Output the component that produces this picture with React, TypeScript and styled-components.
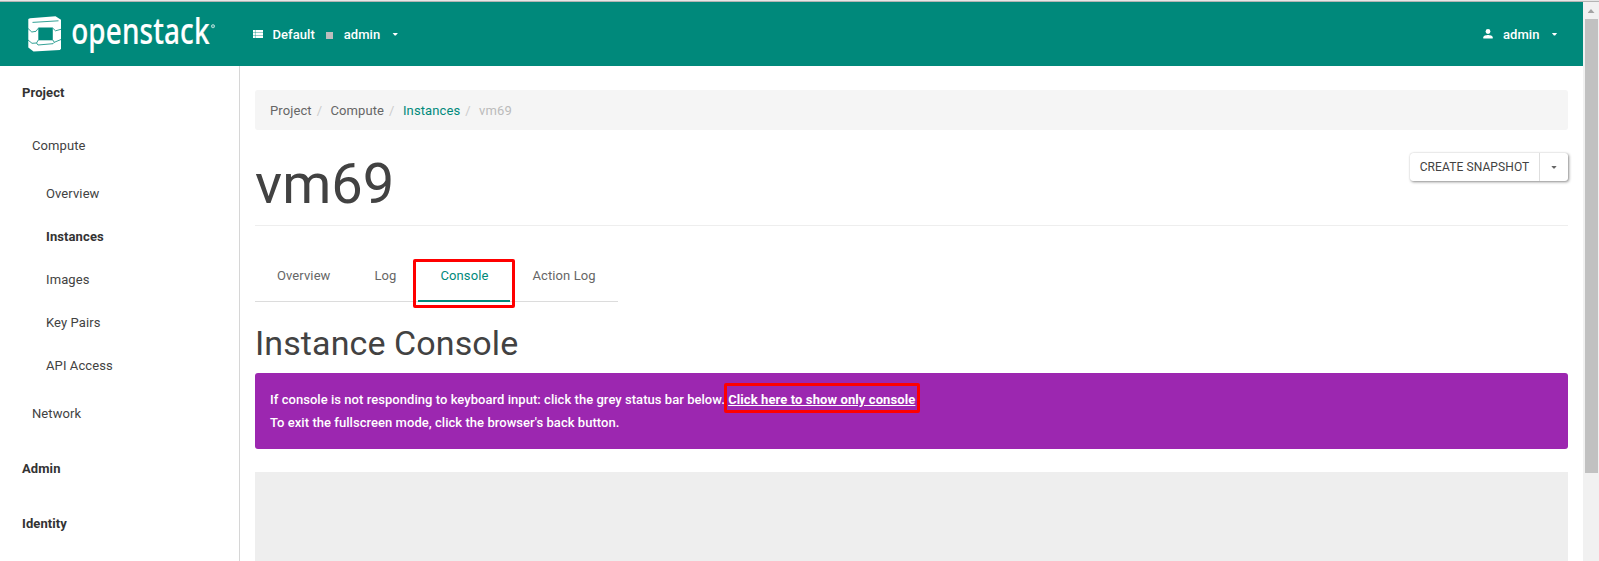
import React from "react";
import styled, { createGlobalStyle } from "styled-components";

const teal = "#00897b";
const red = "#ff0000";

const GlobalStyle = createGlobalStyle`
  * { box-sizing: border-box; }
  html, body { margin: 0; padding: 0; height: 561px; overflow: hidden; }
  body {
    font: 400 13px/23px Roboto, "Liberation Sans", sans-serif;
    letter-spacing: 0.1px;
    color: #424242;
    background: #fff;
  }
  a { color: inherit; text-decoration: none; }
`;

const Window = styled.div`
  display: flex;
  flex-direction: column;
  height: 561px;
`;
const TopEdge = styled.div`
  height: 2px;
  flex: none;
  background: #e6e6e6;
  border-bottom: 1px solid #b4b4b4;
`;
const Viewport = styled.div`
  display: flex;
  flex: 1;
  min-height: 0;
`;
const Page = styled.div`
  display: flex;
  flex-direction: column;
  flex: 1;
  min-width: 0;
`;

const Header = styled.header`
  display: flex;
  align-items: center;
  height: 64px;
  flex: none;
  padding: 0 25px 0 28px;
  background: ${teal};
  color: #fff;
  font-weight: 500;
`;
const Brand = styled.a`
  display: flex;
  width: 225px;
  height: 64px;
`;
const DomainMenu = styled.div`
  display: flex;
  align-items: center;
  flex: 1;
`;
const UserMenu = styled.div`
  display: flex;
  align-items: center;
`;
const MenuLabel = styled.span<{ $left: number; $right: number }>`
  margin: 0 ${(p) => p.$right}px 0 ${(p) => p.$left}px;
  letter-spacing: 0.05px;
`;
const DomainDot = styled.span`
  width: 7px;
  height: 7px;
  margin-top: 2px;
  background: #bdbdbd;
`;
const Caret = styled.span<{ $color?: string }>`
  width: 6px;
  height: 3px;
  margin: 0 0.5px;
  background: ${(p) => p.$color || "#fff"};
  clip-path: polygon(0 0, 100% 0, 60% 100%, 40% 100%);
`;

const Body = styled.div`
  display: flex;
  flex: 1;
  min-height: 0;
`;
const Sidebar = styled.nav`
  width: 240px;
  flex: none;
  border-right: 1px solid #d6d6d6;
  overflow: hidden;
`;
const NavRow = styled.a<{ $level: 0 | 1 | 2; $active?: boolean }>`
  display: flex;
  align-items: center;
  height: ${(p) => [55, 53, 43][p.$level]}px;
  padding-left: ${(p) => [22, 32, 46][p.$level]}px;
  padding-top: ${(p) => (p.$level === 0 ? 2 : 0)}px;
  font-weight: ${(p) => (p.$level === 0 || p.$active ? 700 : 400)};
  color: ${(p) => (p.$level === 0 || p.$active ? "#333" : "#424242")};
  &:first-child {
    height: 53px;
    padding-top: 0;
  }
`;

const Main = styled.main`
  flex: 1;
  min-width: 0;
  padding: 24px 15px 0;
  display: flex;
  flex-direction: column;
`;
const Breadcrumb = styled.div`
  display: flex;
  align-items: center;
  height: 40px;
  flex: none;
  padding: 0 15px;
  border-radius: 3px;
  background: #f5f5f5;
`;
const Crumb = styled.span<{ $color: string }>`
  color: ${(p) => p.$color};
  &:not(:last-child)::after {
    content: "/";
    padding: 0 8.4px 0 5px;
    color: #ccc;
  }
`;
const PageHeader = styled.div`
  display: flex;
  justify-content: space-between;
  height: 96px;
  flex: none;
  border-bottom: 1px solid #eee;
`;
const Title = styled.h1`
  margin: 23px 0 0;
  font-size: 56px;
  font-weight: 400;
  line-height: 62px;
  letter-spacing: 0;
`;
const ButtonGroup = styled.div`
  display: flex;
  height: 28px;
  margin-top: 23px;
  border-radius: 3px;
  font-size: 12px;
  background: #fff;
  box-shadow: 1px 1px 3px rgba(0, 0, 0, 0.45), 0 0 1px rgba(0, 0, 0, 0.2);
`;
const ActionButton = styled.button`
  width: 130px;
  padding: 0;
  border: 0;
  border-right: 1px solid #dedede;
  background: none;
  font: inherit;
  letter-spacing: 0.1px;
  color: #424242;
`;
const ToggleButton = styled.button`
  display: flex;
  align-items: center;
  justify-content: center;
  width: 28px;
  padding: 0;
  border: 0;
  background: none;
`;

const Tabs = styled.div`
  display: flex;
  align-self: flex-start;
  height: 50px;
  margin-top: 26px;
  flex: none;
  border-bottom: 1px solid #dcdcdc;
`;
const Tab = styled.a<{ $width: number; $active?: boolean }>`
  position: relative;
  width: ${(p) => p.$width}px;
  height: 50px;
  padding: 12px 0 0 22.5px;
  color: ${(p) => (p.$active ? teal : "#666")};
  border-bottom: ${(p) => (p.$active ? `2px solid ${teal}` : "0")};
  &:first-child {
    padding-left: 22px;
  }
`;
const Marker = styled.span<{ $inset: string }>`
  position: absolute;
  inset: ${(p) => p.$inset};
  border: 3px solid ${red};
  border-radius: 2px;
  pointer-events: none;
`;
const SectionTitle = styled.h2`
  margin: 22px 0 11px;
  font-size: 34px;
  font-weight: 400;
  line-height: 38px;
`;
const Alert = styled.div`
  height: 76px;
  flex: none;
  padding: 15px;
  border-radius: 3px;
  background: #9c27b0;
  color: #fff;
  font-weight: 500;
  letter-spacing: 0.045px;
`;
const AlertLink = styled.a`
  position: relative;
  font-weight: 700;
  letter-spacing: 0.1px;
`;
const LinkText = styled.span`
  text-decoration: underline;
`;
const ConsolePane = styled.div`
  flex: 1;
  margin-top: 23px;
  background: #eee;
`;

const ScrollTrack = styled.div`
  display: flex;
  flex-direction: column;
  align-items: center;
  width: 16px;
  flex: none;
  background: #f1f1f1;
`;
const ScrollArrow = styled.div`
  width: 7px;
  height: 4px;
  margin: 7px 0 6px;
  background: #a3a3a3;
  clip-path: polygon(50% 0, 100% 100%, 0 100%);
`;
const ScrollThumb = styled.div`
  width: 13px;
  height: 454px;
  background: #c1c1c1;
  margin-left: 1px;
`;

const Logo = () => (
  <svg width="225" height="64" viewBox="0 2 225 64" aria-label="openstack">
    <path
      d="M.3 19 2 18.2 27.5 16.3 33 19.8V48.5L32 50 5.5 51.5 .3 47.5Z"
      fill="#fff"
    />
    <path d="M10.3 27.5H24.8V40.3H10.3Z" fill={teal} />
    <path
      d="M4.5 22.4 30.5 20.8M0 28.5 3.8 32 8 31.3 10.3 28.2M24.8 28.2 27.5 30.8 33 29.3M0 40 4 43.3 8.5 43 10.3 40M24.8 40 26.3 42.3 33 39.5M10 45 25 43.7 26.3 42.3M8.5 43 10 45"
      fill="none"
      stroke={teal}
      strokeWidth="0.8"
    />
    <g transform="translate(43.2 44.2) scale(.775 1)">
      <text
        fill="#fff"
        stroke="#fff"
        strokeWidth=".2"
        fontFamily="Noto Sans, sans-serif"
        fontSize="36"
        letterSpacing="0"
        textLength="178.5"
      >
        openstack
      </text>
    </g>
    <circle cx="185" cy="26.2" r="1.6" fill="#fff" fillOpacity=".3" stroke="#fff" strokeOpacity=".7" strokeWidth=".8" />
  </svg>
);

const ListIcon = () => (
  <svg width="10" height="8" viewBox="0 0 10 8">
    <path d="M0 0H10V8H0Z" fill="#fff" />
    <path d="M0 2.5H10M0 5.5H10M2.4 0V8" stroke={teal} strokeWidth=".4" fill="none" />
  </svg>
);

const PersonIcon = () => (
  <svg width="10" height="10" viewBox="0 0 10 10">
    <circle cx="5" cy="2.5" r="2.4" fill="#fff" />
    <path d="M.3 9.5V8.3C.3 6.7 3.4 6 5 6S9.7 6.7 9.7 8.3V9.5Z" fill="#fff" />
  </svg>
);

const nav: { label: string; level: 0 | 1 | 2; active?: boolean }[] = [
  { label: "Project", level: 0 },
  { label: "Compute", level: 1 },
  { label: "Overview", level: 2 },
  { label: "Instances", level: 2, active: true },
  { label: "Images", level: 2 },
  { label: "Key Pairs", level: 2 },
  { label: "API Access", level: 2 },
  { label: "Network", level: 1 },
  { label: "Admin", level: 0 },
  { label: "Identity", level: 0 },
];

export default function App() {
  return (
    <Window>
      <GlobalStyle />
      <TopEdge />
      <Viewport>
        <Page>
          <Header>
            <Brand><Logo /></Brand>
            <DomainMenu>
              <ListIcon />
              <MenuLabel $left={9.5} $right={11}>Default</MenuLabel>
              <DomainDot />
              <MenuLabel $left={11} $right={11.5}>admin</MenuLabel>
              <Caret />
            </DomainMenu>
            <UserMenu>
              <PersonIcon />
              <MenuLabel $left={10} $right={11.5}>admin</MenuLabel>
              <Caret />
            </UserMenu>
          </Header>
          <Body>
            <Sidebar>
              {nav.map((n) => (
                <NavRow key={n.label} $level={n.level} $active={n.active}>{n.label}</NavRow>
              ))}
            </Sidebar>
            <Main>
              <Breadcrumb>
                <Crumb $color="#666">Project</Crumb>
                <Crumb $color="#666">Compute</Crumb>
                <Crumb $color={teal}>Instances</Crumb>
                <Crumb $color="#bbb">vm69</Crumb>
              </Breadcrumb>
              <PageHeader>
                <Title>vm69</Title>
                <ButtonGroup>
                  <ActionButton>CREATE SNAPSHOT</ActionButton>
                  <ToggleButton><Caret $color="#666" /></ToggleButton>
                </ButtonGroup>
              </PageHeader>
              <Tabs>
                <Tab $width={97}>Overview</Tab>
                <Tab $width={66}>Log</Tab>
                <Tab $width={92} $active>
                  Console
                  <Marker $inset="7px -5px -8px -5px" />
                </Tab>
                <Tab $width={108}>Action Log</Tab>
              </Tabs>
              <SectionTitle>Instance Console</SectionTitle>
              <Alert>
                If console is not responding to keyboard input: click the grey status bar below.{" "}
                <AlertLink>
                  <LinkText>Click here to show only console</LinkText>
                  <Marker $inset="-9px -5px -6px -4px" />
                </AlertLink>
                <br />
                To exit the fullscreen mode, click the browser's back button.
              </Alert>
              <ConsolePane />
            </Main>
          </Body>
        </Page>
        <ScrollTrack>
          <ScrollArrow />
          <ScrollThumb />
        </ScrollTrack>
      </Viewport>
    </Window>
  );
}
